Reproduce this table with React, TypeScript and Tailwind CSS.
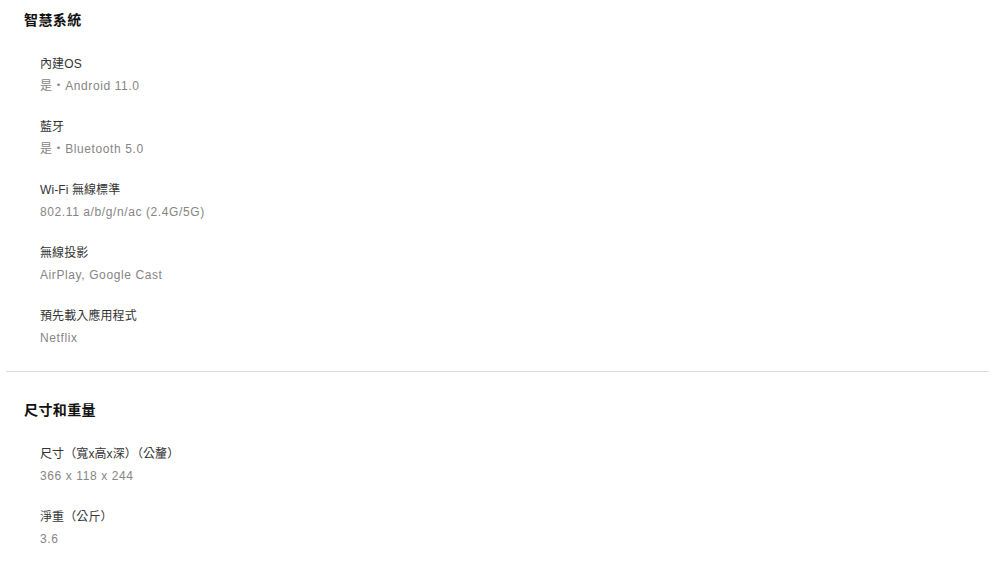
import React from "react";

type Spec = { label: string; value: string };

const smart: Spec[] = [
  { label: "內建OS", value: "是・Android 11.0" },
  { label: "藍牙", value: "是・Bluetooth 5.0" },
  { label: "Wi-Fi 無線標準", value: "802.11 a/b/g/n/ac (2.4G/5G)" },
  { label: "無線投影", value: "AirPlay, Google Cast" },
  { label: "預先載入應用程式", value: "Netflix" },
];

const size: Spec[] = [
  { label: "尺寸（寬x高x深）（公釐）", value: "366 x 118 x 244" },
  { label: "淨重（公斤）", value: "3.6" },
];

const font = { fontFamily: '"Liberation Sans", Arial, "Noto Sans CJK TC", sans-serif' };

const Section = ({ title, items }: { title: string; items: Spec[] }) => (
  <section className="px-[24px]">
    <h2 className="text-[14px] leading-[20px] font-bold text-[#111] tracking-[0.4px]">{title}</h2>
    <div className="mt-[23px] pl-[16px] flex flex-col gap-[19px]">
      {items.map((it) => (
        <div key={it.label}>
          <div className="text-[12px] leading-[22px] text-[#333] tracking-[0.1px]">{it.label}</div>
          <div className="text-[12px] leading-[22px] text-[#858585] tracking-[0.6px]">{it.value}</div>
        </div>
      ))}
    </div>
  </section>
);

export default function App() {
  return (
    <div className="w-[990px] h-[569px] bg-white overflow-hidden pt-[10px]" style={font}>
      <Section title="智慧系統" items={smart} />
      <div className="mt-[22px] mb-[28px] ml-[6px] mr-[1px] h-px bg-[#d9d9d9]" />
      <Section title="尺寸和重量" items={size} />
    </div>
  );
}
